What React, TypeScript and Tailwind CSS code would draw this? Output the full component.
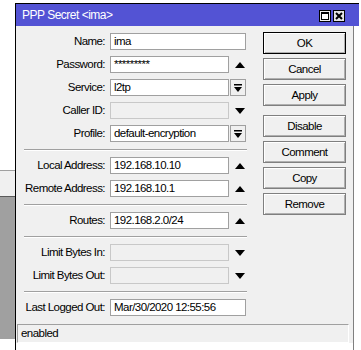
import * as React from "react";

type Trail = "up" | "down" | "drop" | "none";

interface RowProps {
  label: string;
  value?: string;
  trail?: Trail;
  disabled?: boolean;
}

function UpArrow() {
  return (
    <svg width="10" height="6" viewBox="0 0 10 6">
      <polygon points="0,6 10,6 5,0" fill="#000" />
    </svg>
  );
}

function DownArrow() {
  return (
    <svg width="10" height="6" viewBox="0 0 10 6">
      <polygon points="0,0 10,0 5,6" fill="#000" />
    </svg>
  );
}

function DropButton() {
  return (
    <div className="flex h-[17px] w-[16px] items-center justify-center border border-[#a0a0a0] bg-[#f0f0f0]">
      <svg width="8" height="8" viewBox="0 0 8 8">
        <rect x="0" y="0" width="8" height="1.5" fill="#000" />
        <polygon points="0,3 8,3 4,8" fill="#000" />
      </svg>
    </div>
  );
}

function Row({ label, value = "", trail = "none", disabled }: RowProps) {
  const short = trail !== "none";
  return (
    <div className="flex h-[17px] items-center">
      <div className="w-[82px] shrink-0 pr-[1px] text-right">{label}</div>
      <div
        className={
          "ml-[4px] flex h-[17px] items-center truncate border pl-[3px] " +
          (short ? "w-[119px] " : "w-[136px] ") +
          (disabled
            ? "border-[#c8c8c8] bg-[#f0f0f0]"
            : "border-[#a0a0a0] bg-white")
        }
      >
        {value}
      </div>
      {trail === "up" && (
        <div className="ml-[6px] flex w-[10px] justify-center">
          <UpArrow />
        </div>
      )}
      {trail === "down" && (
        <div className="ml-[6px] flex w-[10px] justify-center">
          <DownArrow />
        </div>
      )}
      {trail === "drop" && (
        <div className="ml-[1px]">
          <DropButton />
        </div>
      )}
    </div>
  );
}

function Sep() {
  return <div className="mt-[1px] h-[2px] w-[223px] border-t border-[#a0a0a0] border-b border-b-white" />;
}

function Btn({ children, primary, className = "" }: { children: React.ReactNode; primary?: boolean; className?: string }) {
  return (
    <div
      className={
        "flex h-[22px] w-[83px] items-center justify-center border bg-[#f0f0f0] shadow-[inset_1px_1px_0_#fff,inset_-1px_-1px_0_#b0b0b0] " +
        (primary ? "border-black" : "border-[#7f7f7f]") +
        " " +
        className
      }
    >
      {children}
    </div>
  );
}

export default function App() {
  return (
    <div className="flex h-[350px] w-[361px] bg-white font-['Liberation_Sans',Arial,sans-serif] text-[11.5px] leading-[15px] tracking-[-0.55px] text-black">
      {/* background strip left of the window */}
      <div className="flex w-[15px] shrink-0 flex-col">
        <div className="h-[170px] bg-white" />
        <div className="h-[1px] bg-[#a0a0a0]" />
        <div className="h-[25px] bg-[#f0f0f0]" />
        <div className="h-[1px] bg-[#5a5a5a]" />
        <div className="h-[142px] bg-[#a0a0a0]" />
        <div className="flex-1 bg-white" />
      </div>

      {/* window */}
      <div className="flex flex-1 flex-col pt-[3px]">
        {/* title bar */}
        <div className="mr-[2px] flex h-[23px] items-center border-l border-t border-black bg-[#5353d4] pl-[6px] pr-[14px] text-white">
          <span className="text-[12px] tracking-[-0.5px]">PPP Secret &lt;ima&gt;</span>
          <div className="ml-auto mt-[2px] flex gap-[2px]">
            <div className="flex h-[12px] w-[12px] items-center justify-center border border-black bg-[#f0f0f0]">
              <div className="h-[8px] w-[8px] border border-t-2 border-black bg-white" />
            </div>
            <div className="flex h-[12px] w-[12px] items-center justify-center border border-black bg-[#e4e4e4]">
              <svg width="8" height="8" viewBox="0 0 8 8">
                <path d="M1 1 L7 7 M7 1 L1 7" stroke="#000" strokeWidth="2" />
              </svg>
            </div>
          </div>
        </div>

        {/* body */}
        <div className="mr-[7px] flex flex-1 flex-col border-l border-r border-l-black border-r-[#808080]">
          <div className="flex flex-col bg-[#f0f0f0]">
            <div className="flex">
              <div className="flex flex-col gap-[6px] pl-[8px] pt-[7px]">
                <Row label="Name:" value="ima" />
                <Row label="Password:" value="*********" trail="up" />
                <Row label="Service:" value="l2tp" trail="drop" />
                <Row label="Caller ID:" trail="down" disabled />
                <Row label="Profile:" value="default-encryption" trail="drop" />
                <Sep />
                <Row label="Local Address:" value="192.168.10.10" trail="up" />
                <Row label="Remote Address:" value="192.168.10.1" trail="up" />
                <Sep />
                <Row label="Routes:" value="192.168.2.0/24" trail="up" />
                <Sep />
                <Row label="Limit Bytes In:" trail="down" disabled />
                <Row label="Limit Bytes Out:" trail="down" disabled />
                <Sep />
                <Row label="Last Logged Out:" value="Mar/30/2020 12:55:56" />
              </div>

              <div className="ml-[16px] flex flex-col gap-[4px] pt-[6px]">
                <Btn primary>OK</Btn>
                <Btn>Cancel</Btn>
                <Btn>Apply</Btn>
                <Btn className="mt-[5px]">Disable</Btn>
                <Btn>Comment</Btn>
                <Btn>Copy</Btn>
                <Btn>Remove</Btn>
              </div>
            </div>

            {/* status bar */}
            <div className="ml-[1px] mr-[4px] mt-[8px] flex h-[19px] items-center border border-b-white border-l-[#a0a0a0] border-r-white border-t-[#a0a0a0] pl-[3px]">
              enabled
            </div>
          </div>
          <div className="flex-1 bg-white" />
        </div>
      </div>
    </div>
  );
}
